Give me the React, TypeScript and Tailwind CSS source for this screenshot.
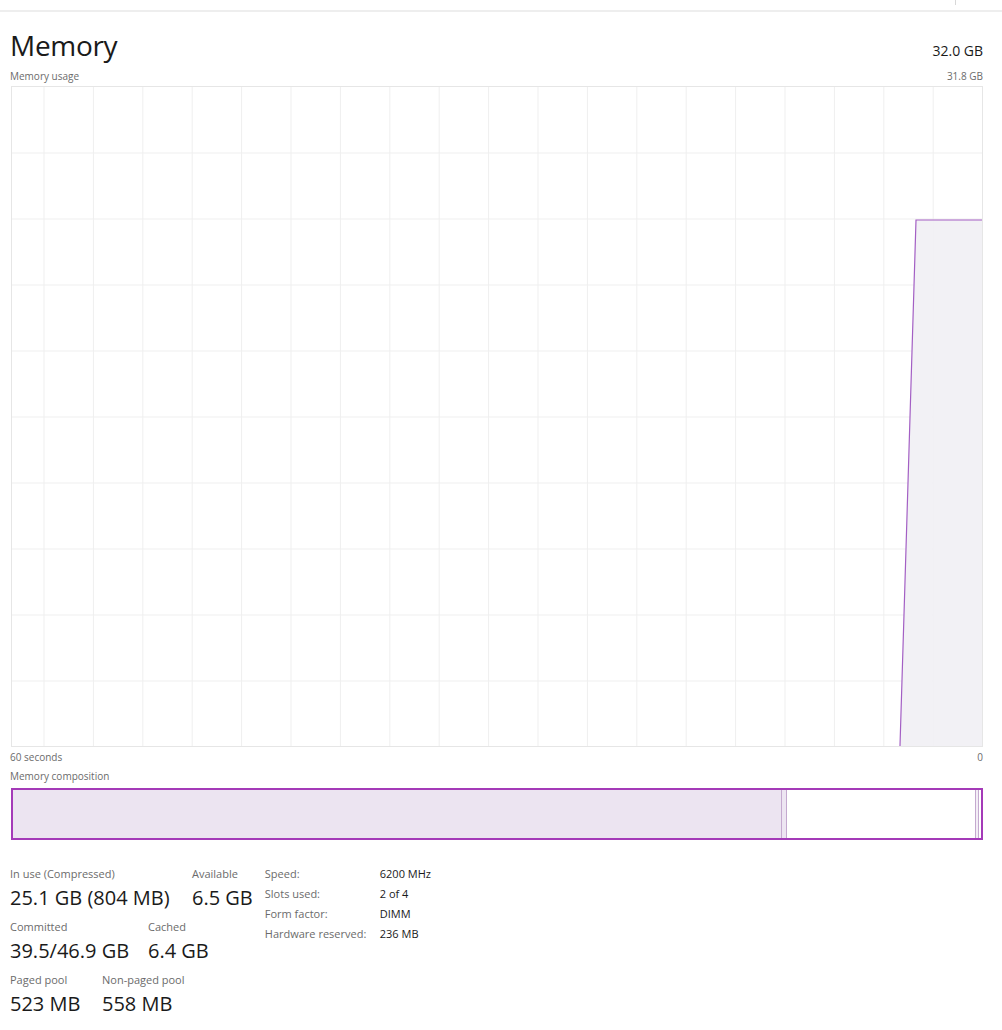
import React from "react";

const vLines = Array.from({ length: 19 }, (_, i) => 32 + i * 49.4);
const hLines = Array.from({ length: 9 }, (_, i) => 66 * (i + 1));

function UsageChart() {
  return (
    <div className="h-[661px] w-[972px] border border-[#e6e6e6]">
      <svg width="970" height="659" viewBox="0 0 970 659" className="block">
        {vLines.map((x) => (
          <line key={x} x1={x} y1={0} x2={x} y2={659} stroke="#efefef" strokeWidth="1" />
        ))}
        {hLines.map((y) => (
          <line key={y} x1={0} y1={y} x2={970} y2={y} stroke="#efefef" strokeWidth="1" />
        ))}
        <polygon points="888,659 904,133 970,133 970,659" fill="#f1eff4" fillOpacity="0.9" />
        <polyline points="888,659 904,133 970,133" fill="none" stroke="#a35fc4" strokeWidth="1.2" />
      </svg>
    </div>
  );
}

function Stat({ label, value, className }: { label: string; value: string; className?: string }) {
  return (
    <div className={className}>
      <div className="text-[11px] leading-[15px] text-[#6b6b6b]">{label}</div>
      <div className="mt-[3px] text-[20px] leading-[28px] text-[#1a1a1a]">{value}</div>
    </div>
  );
}

export default function App() {
  return (
    <div className="h-[1030px] w-[1002px] overflow-hidden bg-white font-['Open_Sans','Noto_Sans',sans-serif] text-[#1a1a1a]">
      {/* top strip */}
      <div className="relative h-[12px] border-b-2 border-[#eeeeee]">
        <div className="absolute left-[955px] top-0 h-[5px] w-px bg-[#d8d8d8]" />
      </div>

      <div className="ml-[10px] w-[973px]">
        {/* header */}
        <div className="mt-[16px] flex items-end justify-between">
          <h1 className="text-[28px] leading-[34px] tracking-[-0.3px]">Memory</h1>
          <div className="mb-[2px] text-[14px] leading-[18px]">32.0 GB</div>
        </div>
        <div className="mt-[7px] flex justify-between text-[10px] leading-[14px] text-[#6b6b6b]">
          <span>Memory usage</span>
          <span>31.8 GB</span>
        </div>

        <div className="mt-[3px] pl-px">
          <UsageChart />
        </div>

        <div className="mt-[3px] flex justify-between text-[10px] leading-[14px] text-[#6b6b6b]">
          <span>60 seconds</span>
          <span>0</span>
        </div>
        <div className="mt-[5px] text-[10px] leading-[14px] text-[#6b6b6b]">Memory composition</div>

        {/* composition bar */}
        <div className="ml-px mt-[5px] flex h-[52px] w-[972px] border-2 border-[#a43ab8]">
          <div className="w-[768px] bg-[#ece4f1]" />
          <div className="w-[6px] border-x border-[#c4a9cf] bg-[#ede5f2]" />
          <div className="w-[188px] bg-white" />
          <div className="w-[4px] border-x border-[#c4a9cf] bg-[#f3eef6]" />
          <div className="flex-1 bg-white" />
        </div>

        {/* stats */}
        <div className="mt-[26px] flex items-start">
          <div className="flex flex-col gap-[7px]">
            <div className="flex">
              <Stat label="In use (Compressed)" value="25.1 GB (804 MB)" className="w-[182px]" />
              <Stat label="Available" value="6.5 GB" />
            </div>
            <div className="flex">
              <Stat label="Committed" value="39.5/46.9 GB" className="w-[138px]" />
              <Stat label="Cached" value="6.4 GB" />
            </div>
            <div className="flex">
              <Stat label="Paged pool" value="523 MB" className="w-[92px]" />
              <Stat label="Non-paged pool" value="558 MB" />
            </div>
          </div>

          <div className="ml-[12px] grid grid-cols-[115px_auto] content-start gap-y-[5px] text-[11px] leading-[15px]">
            <span className="text-[#6b6b6b]">Speed:</span>
            <span>6200 MHz</span>
            <span className="text-[#6b6b6b]">Slots used:</span>
            <span>2 of 4</span>
            <span className="text-[#6b6b6b]">Form factor:</span>
            <span>DIMM</span>
            <span className="text-[#6b6b6b]">Hardware reserved:</span>
            <span>236 MB</span>
          </div>
        </div>
      </div>
    </div>
  );
}
